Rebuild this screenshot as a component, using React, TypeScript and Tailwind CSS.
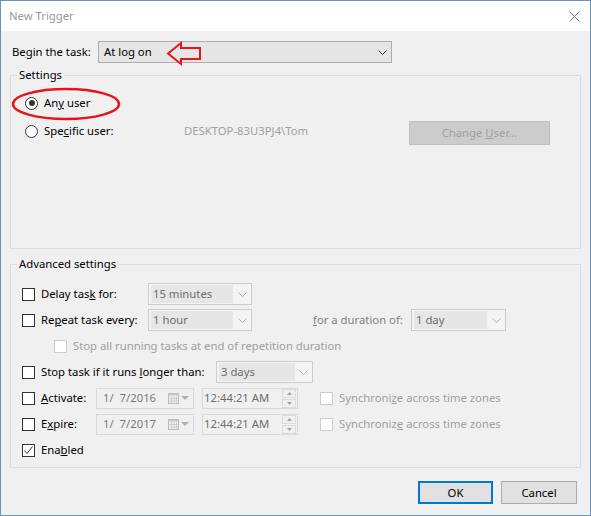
import React from 'react';

function Chevron({ color = '#333' }: { color?: string }) {
  return (
    <svg width="9" height="5" viewBox="0 0 9 5">
      <path d="M0.5 0.5 L4.5 4.5 L8.5 0.5" fill="none" stroke={color} strokeWidth="1" />
    </svg>
  );
}

function Checkbox({ checked = false, disabled = false }: { checked?: boolean; disabled?: boolean }) {
  return (
    <span
      className={`flex h-[13px] w-[13px] shrink-0 items-center justify-center border bg-white ${disabled ? 'border-[#cccccc]' : 'border-[#333333]'}`}
    >
      {checked && (
        <svg width="11" height="11" viewBox="0 0 11 11">
          <path d="M1.5 5.5 L4 8.5 L9.5 1.5" fill="none" stroke="#333" strokeWidth="1" />
        </svg>
      )}
    </span>
  );
}

function Radio({ checked = false }: { checked?: boolean }) {
  return (
    <span className="flex h-[13px] w-[13px] shrink-0 items-center justify-center rounded-full border border-[#333333] bg-white">
      {checked && <span className="h-[6px] w-[6px] rounded-full bg-[#333333]" />}
    </span>
  );
}

function DisabledCombo({ value, width, inner }: { value: string; width: string; inner: string }) {
  return (
    <div className={`flex h-[22px] shrink-0 items-center border border-[#cccccc] bg-[#f4f4f4] ${width}`}>
      <span className={`ml-[2px] flex h-[18px] items-center bg-[#e6e6e6] pl-[2px] text-[#6d6d6d] ${inner}`}>{value}</span>
      <span className="flex flex-1 justify-center">
        <Chevron color="#b0b0b0" />
      </span>
    </div>
  );
}

function DateBox({ value }: { value: string }) {
  return (
    <div className="flex h-[21px] w-[98px] shrink-0 items-center border border-[#d9d9d9] bg-[#f0f0f0] pl-[6px]">
      <span className="w-[64px] whitespace-pre text-[#7a7a7a]">{value}</span>
      <svg width="11" height="11" viewBox="0 0 11 11" className="ml-[1px]">
        <rect x="0.5" y="0.5" width="10" height="10" fill="#f4f4f4" stroke="#b8b8b8" />
        <rect x="0.5" y="0.5" width="10" height="2" fill="#c8c8c8" />
        <path d="M0.5 5.5 H10.5 M0.5 8 H10.5 M3.5 2.5 V10.5 M6 2.5 V10.5 M8.5 2.5 V10.5" stroke="#cfcfcf" strokeWidth="1" />
      </svg>
      <svg width="8" height="4" viewBox="0 0 8 4" className="ml-[2px]">
        <path d="M0 0 H8 L4 4 Z" fill="#b0b0b0" />
      </svg>
    </div>
  );
}

function TimeBox() {
  return (
    <div className="flex h-[21px] w-[96px] shrink-0 items-center border border-[#d9d9d9] bg-[#f0f0f0]">
      <span className="flex-1 pl-[1px] text-[#6d6d6d]">12:44:21 AM</span>
      <div className="mr-[1px] flex h-[19px] w-[14px] flex-col">
        <span className="flex h-[9px] items-center justify-center border border-[#dcdcdc] bg-[#f0f0f0]">
          <svg width="5" height="3" viewBox="0 0 5 3"><path d="M0 3 L2.5 0 L5 3 Z" fill="#a0a0a0" /></svg>
        </span>
        <span className="mt-[1px] flex h-[9px] items-center justify-center border border-[#dcdcdc] bg-[#f0f0f0]">
          <svg width="5" height="3" viewBox="0 0 5 3"><path d="M0 0 L5 0 L2.5 3 Z" fill="#a0a0a0" /></svg>
        </span>
      </div>
    </div>
  );
}

function App() {
  return (
    <div className="relative flex h-[516px] w-[591px] flex-col border border-[#6f92b8] bg-[#f0f0f0] font-['Noto_Sans',sans-serif] text-[11.3px] leading-[16px] text-black">
      {/* title bar */}
      <div className="flex h-[30px] shrink-0 items-center justify-between bg-white pl-[8px] pr-[10px]">
        <span className="text-[#999999]">New Trigger</span>
        <svg width="11" height="11" viewBox="0 0 11 11">
          <path d="M0.5 0.5 L10.5 10.5 M10.5 0.5 L0.5 10.5" stroke="#777" strokeWidth="1" />
        </svg>
      </div>

      <div className="flex flex-1 flex-col px-[9px] pt-[10px]">
        <div className="flex h-[22px] items-center pl-[2px]">
          <span className="w-[86px]">
            Be<u>g</u>in the task:
          </span>
          <div className="flex h-[22px] w-[294px] items-center justify-between border border-[#adadad] bg-[#e5e5e5] pl-[5px] pr-[4px]">
            <span>At log on</span>
            <Chevron />
          </div>
        </div>

        <fieldset className="mt-[4px] h-[182px] border border-[#dcdcdc] pl-[14px] pr-[30px] pt-[10px]">
          <legend className="-ml-[8px] px-[2px] leading-[16px]">Settings</legend>
          <div className="flex h-[20px] items-center">
            <Radio checked />
            <span className="ml-[6px]">
              An<u>y</u> user
            </span>
          </div>
          <div className="mt-[8px] flex items-start">
            <div className="flex h-[20px] w-[159px] items-center">
              <Radio />
              <span className="ml-[6px]">
                Spe<u>c</u>ific user:
              </span>
            </div>
            <span className="flex h-[20px] items-center text-[#a0a0a0]">DESKTOP-83U3PJ4\Tom</span>
            <button className="ml-auto h-[24px] w-[141px] border border-[#bfbfbf] bg-[#cccccc] text-[#a0a0a0]">
              Change <u>U</u>ser...
            </button>
          </div>
        </fieldset>

        <fieldset className="mt-[7px] flex flex-col gap-[4px] border border-[#dcdcdc] pb-[6px] pl-[11px] pt-[11px]">
          <legend className="-ml-[5px] px-[2px] leading-[16px]">Advanced settings</legend>

          <div className="flex h-[22px] items-center">
            <div className="flex w-[126px] items-center">
              <Checkbox />
              <span className="ml-[6px]">
                Delay tas<u>k</u> for:
              </span>
            </div>
            <DisabledCombo value="15 minutes" width="w-[104px]" inner="w-[82px]" />
          </div>

          <div className="flex h-[22px] items-center">
            <div className="flex w-[126px] items-center">
              <Checkbox />
              <span className="ml-[6px]">
                Re<u>p</u>eat task every:
              </span>
            </div>
            <DisabledCombo value="1 hour" width="w-[104px]" inner="w-[82px]" />
            <span className="ml-[61px] w-[98px] text-[#7f7f7f]">
              <u>f</u>or a duration of:
            </span>
            <DisabledCombo value="1 day" width="w-[95px]" inner="w-[73px]" />
          </div>

          <div className="flex h-[22px] items-center pl-[32px]">
            <Checkbox disabled />
            <span className="ml-[6px] text-[#a0a0a0]">Stop all running tasks at end of repetition duration</span>
          </div>

          <div className="flex h-[22px] items-center">
            <div className="flex w-[194px] items-center">
              <Checkbox />
              <span className="ml-[6px]">
                Stop task if it runs <u>l</u>onger than:
              </span>
            </div>
            <DisabledCombo value="3 days" width="w-[97px]" inner="w-[76px]" />
          </div>

          <div className="flex h-[22px] items-center">
            <div className="flex w-[74px] items-center">
              <Checkbox />
              <span className="ml-[6px]">
                <u>A</u>ctivate:
              </span>
            </div>
            <DateBox value="1/  7/2016" />
            <div className="ml-[8px]">
              <TimeBox />
            </div>
            <div className="ml-[22px] flex items-center">
              <Checkbox disabled />
              <span className="ml-[6px] text-[#a0a0a0]">
                Synchroni<u>z</u>e across time zones
              </span>
            </div>
          </div>

          <div className="flex h-[22px] items-center">
            <div className="flex w-[74px] items-center">
              <Checkbox />
              <span className="ml-[6px]">
                E<u>x</u>pire:
              </span>
            </div>
            <DateBox value="1/  7/2017" />
            <div className="ml-[8px]">
              <TimeBox />
            </div>
            <div className="ml-[22px] flex items-center">
              <Checkbox disabled />
              <span className="ml-[6px] text-[#a0a0a0]">
                Synchroniz<u>e</u> across time zones
              </span>
            </div>
          </div>

          <div className="flex h-[22px] items-center">
            <Checkbox checked />
            <span className="ml-[6px]">
              Ena<u>b</u>led
            </span>
          </div>
        </fieldset>

        <div className="mt-[13px] flex justify-end gap-[8px] pr-[4px]">
          <button className="h-[23px] w-[75px] border-2 border-[#0078d7] bg-[#e1e1e1]">OK</button>
          <button className="h-[23px] w-[76px] border border-[#adadad] bg-[#e1e1e1]">Cancel</button>
        </div>
      </div>

      {/* red annotations drawn over the dialog */}
      <svg className="pointer-events-none absolute left-[165px] top-[40px]" width="37" height="26" viewBox="0 0 37 26">
        <path d="M2 12.5 L15 2 L15 7 L34 7 L34 18 L15 18 L15 23 Z" fill="none" stroke="#e8141c" strokeWidth="2" strokeLinejoin="miter" />
      </svg>
      <svg className="pointer-events-none absolute left-[10px] top-[86px]" width="110" height="34" viewBox="0 0 110 34">
        <ellipse cx="55" cy="17" rx="53" ry="15" fill="none" stroke="#e8141c" strokeWidth="2.5" />
      </svg>
    </div>
  );
}

export default App;
